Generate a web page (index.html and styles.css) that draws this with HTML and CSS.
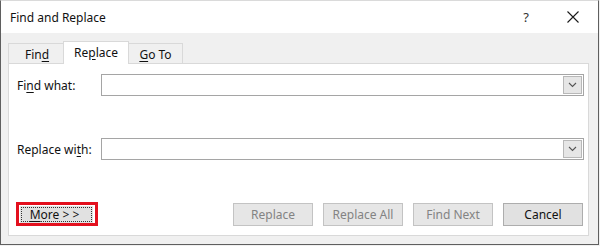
FILE: index.html
```html
<!DOCTYPE html>
<html>
<head>
<meta charset="utf-8">
<link rel="stylesheet" href="styles.css">
</head>
<body>
<div class="window">
  <div class="titlebar">
    <span class="title">Find and Replace</span>
    <span class="help">?</span>
    <svg class="close" width="12" height="12" viewBox="0 0 12 12"><path d="M0.5 0.5L11.5 11.5M11.5 0.5L0.5 11.5" stroke="#1a1a1a" stroke-width="1.1" fill="none"/></svg>
  </div>
  <div class="body">
    <div class="tabs">
      <div class="tab tab-find">Fin<u>d</u></div>
      <div class="tab tab-active">Re<u>p</u>lace</div>
      <div class="tab tab-goto"><u>G</u>o To</div>
    </div>
    <div class="panel">
      <div class="field first">
        <label class="label">Fi<u>n</u>d what:</label>
        <div class="combo">
          <div class="combo-text"></div>
          <div class="combo-btn"><svg width="9" height="6" viewBox="0 0 9 6"><path d="M1 1L4.5 4.5L8 1" stroke="#555" stroke-width="1.1" fill="none"/></svg></div>
        </div>
      </div>
      <div class="field second">
        <label class="label">Replace wi<u>t</u>h:</label>
        <div class="combo">
          <div class="combo-text"></div>
          <div class="combo-btn"><svg width="9" height="6" viewBox="0 0 9 6"><path d="M1 1L4.5 4.5L8 1" stroke="#555" stroke-width="1.1" fill="none"/></svg></div>
        </div>
      </div>
      <div class="buttons">
        <div class="more-outline"><div class="btn more"><span class="focus"><u>M</u>ore &gt; &gt;</span></div></div>
        <div class="btn-group">
          <div class="btn disabled">Replace</div>
          <div class="btn disabled">Replace All</div>
          <div class="btn disabled">Find Next</div>
          <div class="btn">Cancel</div>
        </div>
      </div>
    </div>
  </div>
</div>
</body>
</html>
```
FILE: styles.css
```css
html, body {
  margin: 0;
  padding: 0;
  background: #f0f0f0;
}
body {
  font-family: "Noto Sans", "Open Sans", sans-serif;
  font-size: 12px;
  color: #111111;
}
u {
  text-decoration: underline;
  text-underline-offset: 2px;
}
.window {
  width: 599px;
  height: 245px;
  box-sizing: border-box;
  border-left: 1px solid #5f5f5f;
  border-right: 1px solid #5f5f5f;
  border-bottom: 1px solid #5f5f5f;
  border-top: 1px solid #dadada;
  background: #f0f0f0;
  display: flex;
  flex-direction: column;
}
.titlebar {
  height: 32px;
  background: #ffffff;
  display: flex;
  align-items: center;
  padding-left: 9px;
  padding-right: 19px;
  flex-shrink: 0;
}
.title {
  font-size: 12px;
  color: #111111;
  flex: 1;
  margin-top: 1px;
}
.help {
  font-size: 13px;
  color: #333;
  margin-right: 38px;
}
.close {
  display: block;
}
.body {
  flex: 1;
  padding: 8px 9px 8px 7px;
  display: flex;
  flex-direction: column;
}
.tabs {
  display: flex;
  align-items: flex-start;
  height: 23px;
  margin-bottom: -1px;
}
.tab {
  box-sizing: border-box;
  height: 20px;
  margin-top: 2px;
  border: 1px solid #d9d9d9;
  border-bottom: none;
  background: #f0f0f0;
  display: flex;
  align-items: center;
  justify-content: center;
  padding-top: 1px;
}
.tab-find {
  width: 55px;
  border-right: none;
  padding-left: 2px;
}
.tab-goto {
  width: 54px;
  border-left: none;
}
.tab-active {
  width: 66px;
  height: 23px;
  margin-top: 0;
  background: #ffffff;
  position: relative;
  z-index: 1;
  padding-top: 0;
  padding-bottom: 2px;
}
.panel {
  flex: 1;
  background: #ffffff;
  border: 1px solid #d9d9d9;
  padding: 10px 4px 9px 8px;
  display: flex;
  flex-direction: column;
}
.field {
  display: flex;
  align-items: center;
  height: 22px;
}
.second {
  margin-top: 42px;
}
.label {
  width: 84px;
  flex-shrink: 0;
}
.combo {
  flex: 1;
  height: 22px;
  box-sizing: border-box;
  border: 1px solid #a5a5a5;
  display: flex;
  background: #fff;
}
.combo-text {
  flex: 1;
}
.combo-btn {
  width: 19px;
  box-sizing: border-box;
  margin: 1px 1px 1px 0;
  border: 1px solid #b8b8b8;
  background: #e6e6e6;
  display: flex;
  align-items: center;
  justify-content: center;
}
.buttons {
  margin-top: auto;
  display: flex;
  align-items: center;
  justify-content: space-between;
  margin-left: -1px;
  margin-right: 1px;
}
.more-outline {
  width: 82px;
  height: 24px;
  box-sizing: border-box;
  border: 3px solid #e3101e;
  padding: 1px 2px 0 1px;
  display: flex;
}
.btn-group {
  display: flex;
  gap: 10px;
}
.btn {
  width: 80px;
  height: 23px;
  box-sizing: border-box;
  border: 1px solid #adadad;
  background: #e1e1e1;
  display: flex;
  align-items: center;
  justify-content: center;
  color: #111111;
}
.btn.disabled {
  border-color: #c3c3c3;
  background: #e6e6e6;
  color: #838383;
}
.btn.more {
  width: auto;
  height: auto;
  flex: 1;
  border: none;
  padding: 1px;
}
.focus {
  flex: 1;
  align-self: stretch;
  border: 1px dotted #333;
  display: flex;
  align-items: center;
  justify-content: center;
  padding-right: 4px;
}
```
